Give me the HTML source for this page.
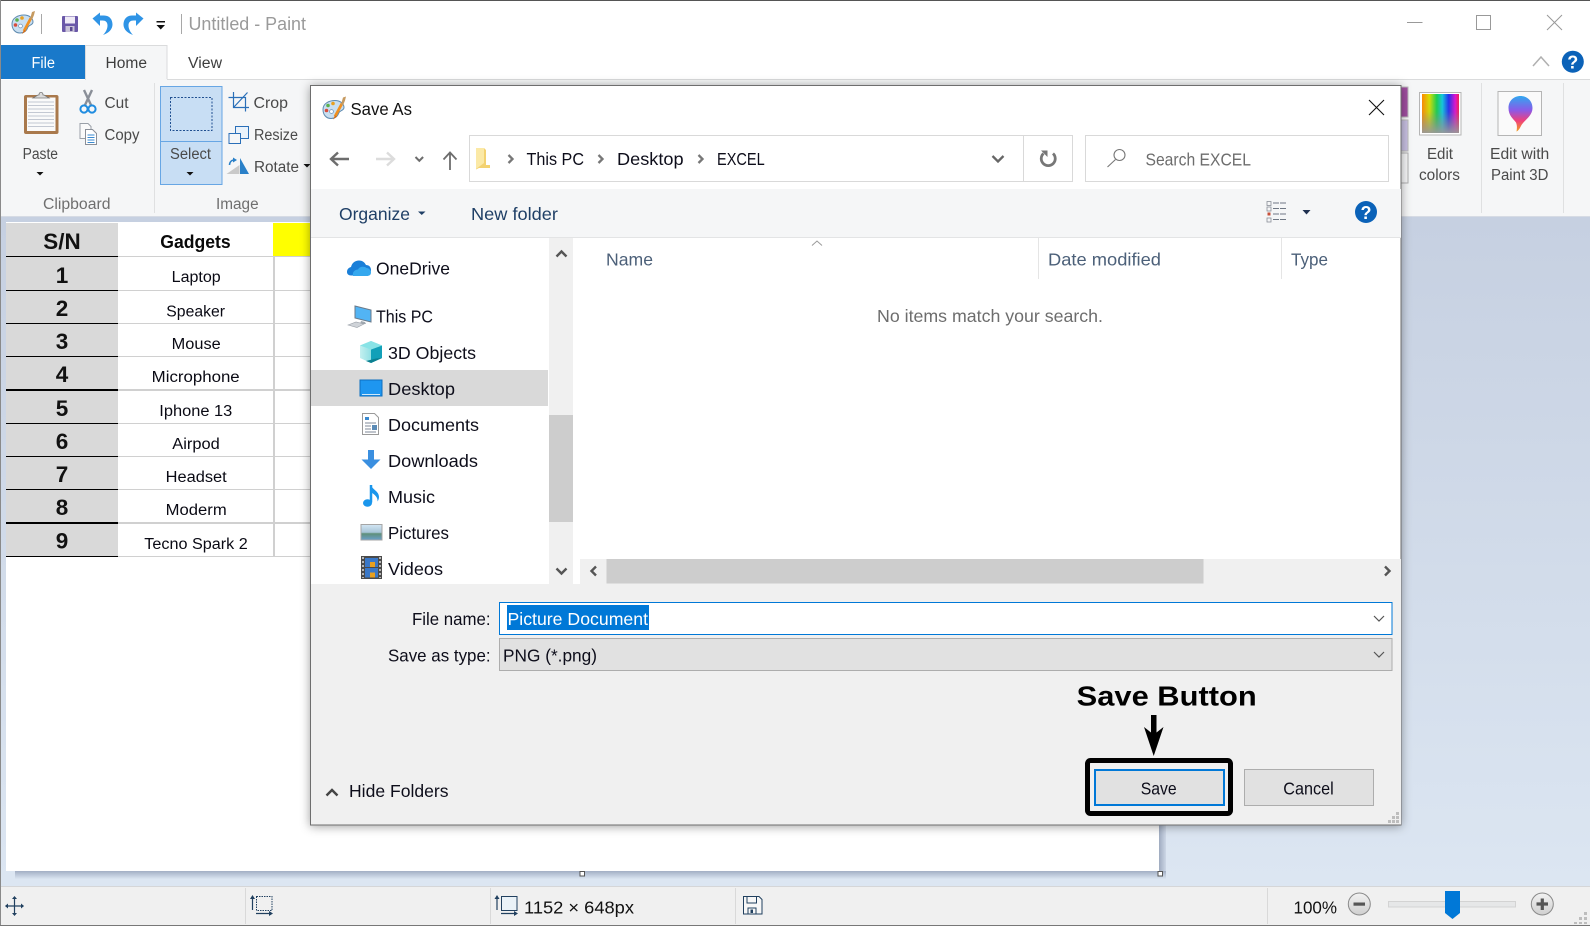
<!DOCTYPE html>
<html lang="en">
<head>
<meta charset="utf-8">
<title>Untitled - Paint</title>
<style>
html,body{margin:0;padding:0;width:1590px;height:926px;overflow:hidden;background:#fff}
svg{display:block;position:absolute;left:0;top:0}
text{font-family:"Liberation Sans",sans-serif;white-space:pre}
.r{font-size:15.5px;fill:#4a4a4a}
.g{font-size:15.5px;fill:#6f6f6f}
.d{font-size:17.5px;fill:#111}
.n{font-size:17.5px;fill:#0d0d1a}
.b{font-size:17.5px;fill:#1f3f66}
.h{font-size:17.5px;fill:#4c6079}
.w{font-size:15.5px;fill:#111}
.num{font-size:22.5px;font-weight:bold;fill:#111}
.it{font-size:15.5px;fill:#0a0a14}
</style>
</head>
<body>
<svg width="1590" height="926" viewBox="0 0 1590 926" xmlns="http://www.w3.org/2000/svg">
<defs>
<linearGradient id="wk" x1="0" y1="0" x2="0" y2="1"><stop offset="0" stop-color="#c6d0e1"/><stop offset="1" stop-color="#dce6f2"/></linearGradient>
<linearGradient id="rb" x1="0" y1="0" x2="1" y2="0"><stop offset="0" stop-color="#ff8a00"/><stop offset=".2" stop-color="#d8e000"/><stop offset=".4" stop-color="#18d050"/><stop offset=".55" stop-color="#10c8e0"/><stop offset=".72" stop-color="#2030f0"/><stop offset=".9" stop-color="#e010d0"/><stop offset="1" stop-color="#f02050"/></linearGradient>
<linearGradient id="rbv" x1="0" y1="0" x2="0" y2="1"><stop offset="0" stop-color="#888" stop-opacity="0"/><stop offset=".45" stop-color="#888" stop-opacity=".1"/><stop offset="1" stop-color="#999" stop-opacity=".95"/></linearGradient>
<linearGradient id="p3" x1="0" y1="0" x2="0" y2="1"><stop offset="0" stop-color="#30a8f0"/><stop offset=".4" stop-color="#8a5ae8"/><stop offset=".7" stop-color="#f0407a"/><stop offset="1" stop-color="#f0a020"/></linearGradient>
<linearGradient id="shR" x1="0" y1="0" x2="1" y2="0"><stop offset="0" stop-color="#9fabc0"/><stop offset="1" stop-color="#cdd7e6"/></linearGradient>
<linearGradient id="shB" x1="0" y1="0" x2="0" y2="1"><stop offset="0" stop-color="#a3afc4"/><stop offset="1" stop-color="#dbe5f1"/></linearGradient>
<linearGradient id="cb" x1="0" y1="0" x2="0" y2="1"><stop offset="0" stop-color="#f2f2f2"/><stop offset="1" stop-color="#cfcfcf"/></linearGradient>
<linearGradient id="pic" x1="0" y1="0" x2="0" y2="1"><stop offset="0" stop-color="#d4e6f4"/><stop offset=".5" stop-color="#a8c6d8"/><stop offset=".6" stop-color="#5f8f7a"/><stop offset="1" stop-color="#6aa0cc"/></linearGradient>
<linearGradient id="cube" x1="0" y1="0" x2="1" y2="0"><stop offset="0" stop-color="#c4f0f0"/><stop offset="1" stop-color="#5fd0d8"/></linearGradient>
<filter id="ds" x="-5%" y="-5%" width="110%" height="110%"><feDropShadow dx="0" dy="1" stdDeviation="5" flood-color="#000" flood-opacity=".38"/></filter>
<g id="pal">
<path d="M1 14C1 8 7 5 13 5c5 0 9 3 9 7 0 3-4 3-5 5-1 3-3 6-8 6-5 0-8-4-8-9z" fill="#c9dff1" stroke="#5f8bb0" stroke-width="1"/>
<circle cx="6" cy="10" r="1.8" fill="#5cb04c"/><circle cx="11" cy="8" r="1.8" fill="#e8a020"/><circle cx="4.500" cy="15" r="1.800" fill="#d84c3c"/><circle cx="9.500" cy="16" r="1.900" fill="#fff" stroke="#6f93b5" stroke-width=".7"/>
<path d="M13 21L20 8" stroke="#f09020" stroke-width="2.800"/><path d="M11 24l2-4 2 1z" fill="#d86a10"/><path d="M19 9l2-7 3-1-1 4-2 5z" fill="#c69a60"/>
</g>
<g id="und">
<path d="M99 15.500h5c6 0 8.500 4.500 8.500 9s-3.500 8.500-9.500 10.500c3-3 4.500-6.500 4.500-9.500 0-3.500-2-5-5-5H99z" fill="#2f94e6"/>
<path d="M92.500 18.500L100 12.500v13.500z" fill="#2f94e6"/>
</g>
</defs>

<!-- app background -->
<rect x="0" y="0" width="1590" height="926" fill="#fff"/>
<rect x="0" y="0" width="1590" height="1" fill="#555"/>
<rect x="0" y="0" width="1" height="926" fill="#8a8a8a"/>

<!-- titlebar -->
<use href="#pal" x="11" y="10"/>
<rect x="41" y="14" width="1" height="20" fill="#a8a8a8"/>
<rect x="62" y="16" width="16" height="16" rx="1" fill="#6a58a8"/><rect x="65" y="16.500" width="10" height="7" fill="#efeaf6"/><rect x="65.500" y="26" width="9" height="6" fill="#c9c3d8"/><rect x="70" y="27" width="2.500" height="4" fill="#5a4a90"/>
<use href="#und"/>
<use href="#und" transform="translate(236,0) scale(-1,1)"/>
<rect x="156.500" y="21" width="8.500" height="1.500" fill="#111"/><path d="M156.500 25h8.500l-4.250 4.500z" fill="#111"/>
<rect x="181" y="14" width="1" height="20" fill="#a8a8a8"/>
<text x="188.500" y="30" font-size="18" fill="#9a9a9a" textLength="117.500" lengthAdjust="spacingAndGlyphs">Untitled - Paint</text>
<!-- window controls -->
<rect x="1407" y="22" width="15.500" height="1" fill="#999"/>
<rect x="1476.500" y="15.500" width="14" height="14" fill="none" stroke="#999" stroke-width="1"/>
<path d="M1547 15l15 15M1562 15l-15 15" stroke="#999" stroke-width="1" fill="none"/>
<path d="M1533 66l8-9 8 9" fill="none" stroke="#b0b0b0" stroke-width="1.500"/>
<ellipse cx="1572.800" cy="61.700" rx="11" ry="11" fill="#0b62b8"/><text x="1572.800" y="68.500" font-size="18" font-weight="bold" fill="#fff" text-anchor="middle">?</text>

<!-- tabs -->
<rect x="1" y="45" width="84" height="34" fill="#1979ca"/>
<text x="31.500" y="68" font-size="15.500" fill="#fff" textLength="23.500" lengthAdjust="spacingAndGlyphs">File</text>
<path d="M85.500 80V45.500h81.500V80" fill="#f5f6f7" stroke="#dadbdc" stroke-width="1"/>
<text x="105.500" y="68" font-size="15.500" fill="#3e3e3e" textLength="41.500" lengthAdjust="spacingAndGlyphs">Home</text>
<text x="188" y="68" font-size="15.500" fill="#3e3e3e" textLength="34" lengthAdjust="spacingAndGlyphs">View</text>
<rect x="167" y="79" width="1423" height="1" fill="#dadbdc"/>
<!-- ribbon -->
<rect x="1" y="80" width="1589" height="137" fill="#f5f6f7"/>
<rect x="86" y="79" width="81" height="2" fill="#f5f6f7"/>
<rect x="154" y="83" width="1" height="130" fill="#dfe0e1"/>
<rect x="1481" y="83" width="1" height="130" fill="#dfe0e1"/>
<rect x="1563" y="83" width="1" height="130" fill="#dfe0e1"/>

<!-- paste -->
<rect x="24" y="95" width="34.500" height="39" rx="2" fill="#a9794c"/><rect x="27" y="97.500" width="28.500" height="33.500" fill="#fafafa"/>
<path d="M28 102h26M28 105.500h26M28 109h26M28 112.500h26M28 116h26M28 119.500h26M28 123h26M28 126.500h26" stroke="#c3c8d2" stroke-width="1"/>
<path d="M33 98l5-3h1c0-3.500 4-3.500 4 0h1l5 3z" fill="#dcdcdc" stroke="#777" stroke-width=".8"/>
<text x="22.600" y="159" class="r" textLength="35.400" lengthAdjust="spacingAndGlyphs">Paste</text>
<path d="M36.500 172h7l-3.500 3.500z" fill="#111"/>
<!-- scissors -->
<path d="M84 90l7 15M92 90l-7 15" stroke="#8a8f98" stroke-width="2.400"/>
<circle cx="84" cy="109" r="3.600" fill="none" stroke="#1f8ce0" stroke-width="2"/><circle cx="92" cy="109" r="3.600" fill="none" stroke="#1f8ce0" stroke-width="2"/>
<text x="104.500" y="108" class="r" textLength="24" lengthAdjust="spacingAndGlyphs">Cut</text>
<!-- copy -->
<path d="M80 123.500h8l3 3v12H80z" fill="#fafafa" stroke="#9aa0a8"/><path d="M85.500 129.500h7l4 4v11h-11z" fill="#fff" stroke="#8a8f98"/><path d="M87.500 135h7M87.500 137.500h7M87.500 140h7M87.500 142.500h7" stroke="#3a8ad0" stroke-width="1"/>
<text x="104.500" y="140" class="r" textLength="35" lengthAdjust="spacingAndGlyphs">Copy</text>
<!-- select -->
<rect x="160.500" y="86.500" width="61.500" height="98" fill="#c8def4" stroke="#67a6e4" stroke-width="1"/>
<rect x="161" y="141" width="61" height="1" fill="#67a6e4"/>
<rect x="170.500" y="97.500" width="41.500" height="33" fill="none" stroke="#1f4f90" stroke-width="1" stroke-dasharray="2 1.500"/>
<text x="170" y="159" class="r" textLength="41" lengthAdjust="spacingAndGlyphs">Select</text>
<path d="M186.500 172h7l-3.500 3.500z" fill="#111"/>
<!-- crop resize rotate -->
<path d="M228.500 97.500h17v14M233.500 92v15.500h15.500M233.500 107.500l14-15" fill="none" stroke="#2a6fb8" stroke-width="1.200"/>
<text x="253.500" y="108" class="r" textLength="34.500" lengthAdjust="spacingAndGlyphs">Crop</text>
<rect x="235.500" y="126.500" width="13" height="12" fill="#e9f2fb" stroke="#2a6fb8"/><rect x="229" y="133.500" width="11.500" height="10" fill="#f5f6f7" stroke="#2a6fb8"/>
<text x="254" y="140" class="r" textLength="44" lengthAdjust="spacingAndGlyphs">Resize</text>
<path d="M226.500 174l13-9v9z" fill="#c9c9c9"/><path d="M240 158v16h9z" fill="#2a80c8"/><path d="M229.500 165c0-3 2-5 5-5" fill="none" stroke="#2a80c8" stroke-width="1.500"/><path d="M233 157.500l4 2.500-4 2.500z" fill="#2a80c8"/>
<text x="254" y="172" class="r" textLength="45" lengthAdjust="spacingAndGlyphs">Rotate</text>
<path d="M303.500 164h7l-3.500 3.500z" fill="#111"/>
<text x="43" y="209" class="g" textLength="67.500" lengthAdjust="spacingAndGlyphs">Clipboard</text>
<text x="216" y="209" class="g" textLength="42.600" lengthAdjust="spacingAndGlyphs">Image</text>

<!-- colour swatches at dialog's right -->
<rect x="1395" y="87" width="13" height="30" fill="#a04ea0" stroke="#bbb"/>
<rect x="1395" y="120" width="13" height="31" fill="#c8c0e2" stroke="#bbb"/>
<rect x="1395" y="153" width="13" height="30" fill="#f5f6f7" stroke="#b0b0b0"/>
<rect x="1419.500" y="92.500" width="41.500" height="42.500" fill="#fff" stroke="#b5b5b5"/>
<rect x="1422" y="94" width="37" height="39" fill="url(#rb)"/><rect x="1422" y="94" width="37" height="39" fill="url(#rbv)"/>
<text x="1427" y="159" class="r" textLength="26" lengthAdjust="spacingAndGlyphs">Edit</text>
<text x="1419" y="180" class="r" textLength="41" lengthAdjust="spacingAndGlyphs">colors</text>
<rect x="1498" y="91.500" width="43.500" height="44" fill="#fafafa" stroke="#b5b5b5"/>
<path d="M1520.500 96c7 0 12 5 12 12 0 8-8 12-11 17-1 2-3 6-5 6.500 .5-3 .8-6-.5-9-3-4-7.500-7-7.500-14.500 0-7 5-12 12-12z" fill="url(#p3)"/>
<text x="1490" y="159" class="r" textLength="59.300" lengthAdjust="spacingAndGlyphs">Edit with</text>
<text x="1491" y="180" class="r" textLength="57.400" lengthAdjust="spacingAndGlyphs">Paint 3D</text>

<!-- workspace -->
<rect x="1" y="217" width="1589" height="670" fill="url(#wk)"/>
<rect x="1" y="216" width="1589" height="1" fill="#d6dbe4"/>
<rect x="1159" y="231" width="7" height="640" fill="url(#shR)"/>
<rect x="15" y="871" width="1151" height="8" fill="url(#shB)"/>
<rect x="6" y="222" width="1153" height="649" fill="#fff"/>
<rect x="580" y="871.500" width="4.500" height="4.500" fill="#fff" stroke="#555" stroke-width="1"/>
<rect x="1158" y="871.500" width="4.500" height="4.500" fill="#fff" stroke="#555" stroke-width="1"/>

<!-- sheet -->
<rect x="6" y="223" width="112" height="333" fill="#d9d9d9"/>
<rect x="273" y="223" width="38" height="34" fill="#ffff00"/>
<rect x="118" y="256" width="192" height="1" fill="#d0d0d0"/>
<rect x="118" y="290" width="192" height="1" fill="#d0d0d0"/>
<rect x="118" y="323" width="192" height="1" fill="#d0d0d0"/>
<rect x="118" y="356" width="192" height="1" fill="#d0d0d0"/>
<rect x="118" y="389" width="192" height="2" fill="#d0d0d0"/>
<rect x="118" y="423" width="192" height="1" fill="#d0d0d0"/>
<rect x="118" y="456" width="192" height="1" fill="#d0d0d0"/>
<rect x="118" y="489" width="192" height="1" fill="#d0d0d0"/>
<rect x="118" y="522" width="192" height="2" fill="#d0d0d0"/>
<rect x="118" y="556" width="192" height="1" fill="#d0d0d0"/>
<rect x="273" y="257" width="2" height="300" fill="#d0d0d0"/>
<rect x="6" y="256" width="112" height="1" fill="#000"/>
<rect x="6" y="290" width="112" height="1" fill="#000"/>
<rect x="6" y="323" width="112" height="1" fill="#000"/>
<rect x="6" y="356" width="112" height="1" fill="#000"/>
<rect x="6" y="389" width="112" height="2" fill="#000"/>
<rect x="6" y="423" width="112" height="1" fill="#000"/>
<rect x="6" y="456" width="112" height="1" fill="#000"/>
<rect x="6" y="489" width="112" height="1" fill="#000"/>
<rect x="6" y="522" width="112" height="2" fill="#000"/>
<rect x="6" y="556" width="112" height="1" fill="#000"/>
<text x="43.300" y="249" class="num" textLength="37.400" lengthAdjust="spacingAndGlyphs">S/N</text>
<text x="160.300" y="247.800" font-size="18" font-weight="bold" fill="#0a0a0a" textLength="70.400" lengthAdjust="spacingAndGlyphs">Gadgets</text>
<g text-anchor="middle">
<text x="62" y="283" class="num">1</text>
<text x="62" y="316" class="num">2</text>
<text x="62" y="349" class="num">3</text>
<text x="62" y="382" class="num">4</text>
<text x="62" y="416" class="num">5</text>
<text x="62" y="449" class="num">6</text>
<text x="62" y="482" class="num">7</text>
<text x="62" y="515" class="num">8</text>
<text x="62" y="548.500" class="num">9</text>
</g>
<text x="171.700" y="282.200" class="it" textLength="49" lengthAdjust="spacingAndGlyphs">Laptop</text>
<text x="166.300" y="316.300" class="it" textLength="58.700" lengthAdjust="spacingAndGlyphs">Speaker</text>
<text x="171.700" y="349.200" class="it" textLength="49" lengthAdjust="spacingAndGlyphs">Mouse</text>
<text x="151.700" y="382.200" class="it" textLength="88" lengthAdjust="spacingAndGlyphs">Microphone</text>
<text x="159.300" y="416.200" class="it" textLength="73" lengthAdjust="spacingAndGlyphs">Iphone 13</text>
<text x="172.300" y="449.200" class="it" textLength="47.400" lengthAdjust="spacingAndGlyphs">Airpod</text>
<text x="165.700" y="482.200" class="it" textLength="61" lengthAdjust="spacingAndGlyphs">Headset</text>
<text x="165.700" y="515.200" class="it" textLength="61" lengthAdjust="spacingAndGlyphs">Moderm</text>
<text x="144.300" y="549" class="it" textLength="103.400" lengthAdjust="spacingAndGlyphs">Tecno Spark 2</text>

<!-- status bar -->
<rect x="1" y="887" width="1589" height="38" fill="#f0f0f0"/>
<rect x="1" y="886" width="1589" height="1" fill="#d5d6d8"/>
<rect x="0" y="925" width="1590" height="1" fill="#777"/>
<rect x="245" y="888" width="1" height="36" fill="#d9d9d9"/>
<rect x="490" y="888" width="1" height="36" fill="#d9d9d9"/>
<rect x="735" y="888" width="1" height="36" fill="#d9d9d9"/>
<rect x="1267" y="888" width="1" height="36" fill="#d9d9d9"/>
<path d="M14.500 897v18M5.500 906h18" stroke="#21405f" stroke-width="1.200"/>
<path d="M14.500 896l-2.500 3h5zM14.500 916l-2.500-3h5zM5 906l3-2.500v5zM24 906l-3-2.500v5z" fill="#21405f"/>
<rect x="256.500" y="896.500" width="15.500" height="14" fill="none" stroke="#21405f" stroke-dasharray="1.500 1"/>
<path d="M252.500 898v12M256 913.500h15" stroke="#21405f" stroke-width="1.200"/><path d="M252.500 895l-2.500 4h5zM273 913.500l-4-2.500v5z" fill="#21405f"/>
<rect x="501.500" y="896.500" width="15.500" height="14" fill="#eaf2f8" stroke="#21405f"/>
<path d="M497 898v12M501 913.500h15" stroke="#21405f" stroke-width="1.200"/><path d="M497 895l-2.500 4h5zM518 913.500l-4-2.500v5z" fill="#21405f"/>
<text x="524" y="913.500" font-size="17.500" fill="#111" textLength="110" lengthAdjust="spacingAndGlyphs">1152 × 648px</text>
<path d="M743.500 896.500h15.500l3 3v14.500h-18.500z" fill="#f7f7f7" stroke="#21405f"/><path d="M747 896.500v6.500h9.500v-6.500M748 914v-6h8v6" fill="none" stroke="#21405f"/><rect x="750.500" y="909.500" width="2.500" height="3.500" fill="#21405f"/>
<text x="1293.500" y="913.500" font-size="17.500" fill="#111" textLength="43.500" lengthAdjust="spacingAndGlyphs">100%</text>
<circle cx="1359.300" cy="904" r="11" fill="url(#cb)" stroke="#8a8a8a"/><rect x="1353.500" y="902.500" width="11.500" height="3.200" fill="#555"/>
<rect x="1388.500" y="901.500" width="127" height="5.500" fill="#e6e7e8" stroke="#d3d3d3"/>
<path d="M1445 891h15v22l-7.500 6-7.500-6z" fill="#0078d7"/>
<circle cx="1542.300" cy="904" r="11" fill="url(#cb)" stroke="#8a8a8a"/><path d="M1536.500 904h11.500M1542.300 898.500v11.500" stroke="#555" stroke-width="3.200"/>
<path d="M1584 917h3v3h-3zM1584 912h3v3h-3zM1579 917h3v3h-3zM1579 922h3v2h-3zM1584 922h3v2h-3zM1574 922h3v2h-3z" fill="#bdbdbd"/>

<!-- DIALOG -->
<rect x="310.500" y="85.500" width="1090.500" height="739.500" fill="#fff" stroke="#6e6e6e" stroke-width="1" filter="url(#ds)"/>
<use href="#pal" x="322" y="95.500"/>
<text x="350.500" y="114.800" font-size="17.500" fill="#111" textLength="61.500" lengthAdjust="spacingAndGlyphs">Save As</text>
<path d="M1369 100l15 15M1384 100l-15 15" stroke="#111" stroke-width="1.100" fill="none"/>

<!-- nav buttons -->
<path d="M349 159h-17M338 152.500l-7 6.500 7 6.500" fill="none" stroke="#6d6d6d" stroke-width="2.400"/>
<path d="M376 159h17M387 152.500l7 6.500-7 6.500" fill="none" stroke="#dcdcdc" stroke-width="2.400"/>
<path d="M415.500 157l3.800 3.800 3.800-3.800" fill="none" stroke="#6d6d6d" stroke-width="2"/>
<path d="M450 170v-17M443.500 159.500l6.500-7 6.500 7" fill="none" stroke="#6d6d6d" stroke-width="1.800"/>
<rect x="469.500" y="135.500" width="603" height="46" fill="#fff" stroke="#d9d9d9"/>
<rect x="1023" y="136" width="1" height="45" fill="#d9d9d9"/>
<path d="M476 148h8l2 2v15h4v3h-11l-3 1.500z" fill="#f3d271"/><path d="M476 148h8v15l-8 6z" fill="#fbe9a6"/>
<path d="M508.500 155l4 4-4 4M598.500 155l4 4-4 4M698.500 155l4 4-4 4" fill="none" stroke="#777" stroke-width="2.300"/>
<text x="526.500" y="165" class="n" textLength="57.500" lengthAdjust="spacingAndGlyphs">This PC</text>
<text x="617" y="165" class="n" textLength="66.600" lengthAdjust="spacingAndGlyphs">Desktop</text>
<text x="717" y="165" class="n" textLength="47.700" lengthAdjust="spacingAndGlyphs">EXCEL</text>
<path d="M992.500 156l5.500 5.500 5.500-5.500" fill="none" stroke="#666" stroke-width="2.300"/>
<path d="M1043.500 153.500a7 7 0 1 0 9.500 0" fill="none" stroke="#777" stroke-width="2.800"/><path d="M1041 150.500h6.500v6.500z" fill="#777"/>
<rect x="1085.500" y="135.500" width="303" height="46" fill="#fff" stroke="#d9d9d9"/>
<circle cx="1119.500" cy="155" r="5.500" fill="none" stroke="#777" stroke-width="1.100"/><path d="M1115.500 159.500l-8 7.500" stroke="#777" stroke-width="1.100"/>
<text x="1145.500" y="165.700" font-size="17.500" fill="#6d6d6d" textLength="105.500" lengthAdjust="spacingAndGlyphs">Search EXCEL</text>

<!-- toolbar -->
<rect x="311" y="189" width="1090" height="48" fill="#f5f6f7"/>
<rect x="311" y="237" width="1090" height="1" fill="#e3e4e5"/>
<text x="339" y="220" class="b" textLength="71" lengthAdjust="spacingAndGlyphs">Organize</text>
<path d="M418 211.500h7.500l-3.750 3.500z" fill="#1f3f66"/>
<text x="471" y="220" class="b" textLength="87" lengthAdjust="spacingAndGlyphs">New folder</text>
<rect x="1267" y="201.500" width="4" height="4" fill="none" stroke="#8a8f98" stroke-width=".8"/><rect x="1267" y="207" width="4" height="4" fill="none" stroke="#8a8f98" stroke-width=".8"/><rect x="1267.500" y="212.500" width="3" height="3" fill="#c8503a"/><rect x="1267" y="218" width="4" height="4" fill="none" stroke="#8a8f98" stroke-width=".8"/>
<path d="M1273 203h13.500M1273 208.500h13.500M1273 214h13.500M1273 219.500h13.500" stroke="#6f7784" stroke-width="1" stroke-dasharray="6 1"/>
<path d="M1302.500 210h8l-4 4.500z" fill="#1f3050"/>
<ellipse cx="1366" cy="212" rx="11" ry="11" fill="#0b62b8"/><text x="1366" y="218.800" font-size="18" font-weight="bold" fill="#fff" text-anchor="middle">?</text>

<!-- header row -->
<path d="M812 245.500l5-4.500 5 4.500" fill="none" stroke="#9a9a9a" stroke-width="1"/>
<text x="606" y="265.300" class="h" textLength="47" lengthAdjust="spacingAndGlyphs">Name</text>
<text x="1048" y="265.500" class="h" textLength="113" lengthAdjust="spacingAndGlyphs">Date modified</text>
<text x="1291" y="265.500" class="h" textLength="37" lengthAdjust="spacingAndGlyphs">Type</text>
<rect x="1038" y="238" width="1" height="41" fill="#e5e5e5"/>
<rect x="1281" y="238" width="1" height="41" fill="#e5e5e5"/>
<text x="877" y="322" font-size="17.500" fill="#6d6d6d" textLength="226" lengthAdjust="spacingAndGlyphs">No items match your search.</text>

<!-- nav pane -->
<rect x="311" y="370" width="237" height="36" fill="#d9d9d9"/>
<rect x="549" y="238" width="24" height="346" fill="#f0f0f0"/>
<rect x="549" y="415" width="24" height="107" fill="#cdcdcd"/>
<path d="M556.500 256.500l5-5 5 5" fill="none" stroke="#555" stroke-width="2.400"/>
<path d="M556.500 568.500l5 5 5-5" fill="none" stroke="#555" stroke-width="2.400"/>

<path d="M347 272c0-3 2-4.500 4-5 1-4 4-6.500 8-6.500 3 0 5.500 1.500 7 4.500 3 0 5 2 5 5 0 3-2 5.500-5 5.500h-15c-2.500 0-4-1.500-4-3.500z" fill="#1a7fd8"/><path d="M353 276c-1-4 2-6.500 5-6.500 1.500-3 6-3.500 8.500-1.500 2.500 0 4.500 2.500 4.500 4.500 0 2.500-2 3.500-4 3.500z" fill="#35a8ee"/>
<text x="376" y="274.500" class="n" textLength="74" lengthAdjust="spacingAndGlyphs">OneDrive</text>

<path d="M355 306l16 4v12l-16-4z" fill="#52b4f4" stroke="#6a7a8a" stroke-width="1"/><path d="M361 321l-1 3h6l-1-2z" fill="#a0a8b0"/><path d="M348 325l8-3 8 2-7 3.500z" fill="#cfd3d8" stroke="#9aa0a8" stroke-width=".6"/>
<text x="376" y="322.500" class="n" textLength="57" lengthAdjust="spacingAndGlyphs">This PC</text>

<path d="M371 341l11 4.500v12.500l-11 5-11-5v-12.500z" fill="url(#cube)"/><path d="M371 349.500l11-4v12.500l-11 5z" fill="#12a0b8"/><path d="M371 341l11 4.500-11 4-11-4z" fill="#88e3e6"/><path d="M376 358.500l6-.5-11 5-5-2z" fill="#0b7f90"/>
<text x="388" y="359" class="n" textLength="88" lengthAdjust="spacingAndGlyphs">3D Objects</text>

<rect x="360" y="380" width="22" height="16" fill="#1e96f0" stroke="#0d6fc0" stroke-width="1"/><rect x="362" y="394" width="18" height="1" fill="#cfe9fb"/>
<text x="388" y="395" class="n" textLength="67" lengthAdjust="spacingAndGlyphs">Desktop</text>

<path d="M362.500 413.500h12l4 4v17h-16z" fill="#fff" stroke="#9a9a9a"/><path d="M365 419h4M365 423h11M365 426h6M365 429h6M365 432h11" stroke="#7f8a98" stroke-width="1"/><rect x="372" y="425" width="5" height="5" fill="#5a8ab5"/><rect x="365" y="417" width="4" height="3" fill="#3a8ad0"/>
<text x="388" y="431" class="n" textLength="91" lengthAdjust="spacingAndGlyphs">Documents</text>

<path d="M368 450h6v9.500h6.500L371 469l-9.500-9.500h6.500z" fill="#3a8fe0"/>
<text x="388" y="467" class="n" textLength="90" lengthAdjust="spacingAndGlyphs">Downloads</text>

<path d="M371 485v17.500" stroke="#1a96ec" stroke-width="2.500"/><ellipse cx="367.500" cy="503" rx="4.500" ry="3.800" fill="#1a96ec"/><path d="M371 485c1.500 5 8 6 8 12 0 2-.8 3.500-1.500 4.500 .5-4-3-7.500-6.500-9z" fill="#1a96ec"/>
<text x="388" y="503" class="n" textLength="47" lengthAdjust="spacingAndGlyphs">Music</text>

<rect x="361" y="524.500" width="21" height="15.500" fill="url(#pic)" stroke="#a5a5a5"/>
<text x="388" y="539" class="n" textLength="61" lengthAdjust="spacingAndGlyphs">Pictures</text>

<rect x="361" y="556" width="21" height="23" fill="#4a4a4a"/><rect x="365" y="558" width="13" height="9" fill="#3a78c8"/><rect x="365" y="568" width="13" height="9.500" fill="#3a78c8"/><rect x="370" y="562" width="5" height="5" fill="#e8a020"/><rect x="370" y="572.500" width="5" height="5" fill="#e8a020"/><path d="M363 557v21M380 557v21" stroke="#ddd" stroke-width="1.500" stroke-dasharray="2 2"/>
<text x="388" y="575" class="n" textLength="55" lengthAdjust="spacingAndGlyphs">Videos</text>

<!-- footer -->
<rect x="311" y="584" width="1090" height="240.500" fill="#f0f0f0"/>
<rect x="580" y="559" width="821" height="25" fill="#f0f0f0"/>
<rect x="606.500" y="559" width="597" height="24.500" fill="#cdcdcd"/>
<path d="M596 566.500l-4.500 4.500 4.500 4.500" fill="none" stroke="#555" stroke-width="2.400"/>
<path d="M1385 566.500l4.500 4.500-4.500 4.500" fill="none" stroke="#555" stroke-width="2.400"/>

<text x="412" y="625" class="n" textLength="78.600" lengthAdjust="spacingAndGlyphs">File name:</text>
<rect x="499.500" y="602.500" width="892.500" height="32" fill="#fff" stroke="#0078d7"/>
<rect x="507" y="605" width="142" height="25" fill="#0078d7"/>
<text x="507.500" y="625" font-size="17.500" fill="#fff" textLength="140.500" lengthAdjust="spacingAndGlyphs">Picture Document</text>
<path d="M1374 616l5 5 5-5" fill="none" stroke="#555" stroke-width="1.200"/>
<text x="388" y="661.700" class="n" textLength="102.600" lengthAdjust="spacingAndGlyphs">Save as type:</text>
<rect x="499.500" y="638.500" width="892.500" height="32" fill="#e1e1e1" stroke="#adadad"/>
<text x="503" y="661.700" class="n" textLength="94" lengthAdjust="spacingAndGlyphs">PNG (*.png)</text>
<path d="M1374 652l5 5 5-5" fill="none" stroke="#555" stroke-width="1.200"/>

<path d="M326.500 795.500l5.500-5.500 5.500 5.500" fill="none" stroke="#444" stroke-width="2.400"/>
<text x="349" y="797" class="n" textLength="99.500" lengthAdjust="spacingAndGlyphs">Hide Folders</text>

<!-- annotation -->
<text x="1076.700" y="705.500" font-size="28" font-weight="bold" fill="#000" textLength="180" lengthAdjust="spacingAndGlyphs">Save Button</text>
<path d="M1151 715h5.500v17.500l7-5.500-9.800 29-9.700-29 7 5.500z" fill="#000"/>
<rect x="1087.500" y="760.500" width="143" height="53" rx="3" fill="#f0f0f0" stroke="#000" stroke-width="5"/>
<rect x="1095" y="770" width="129" height="35" fill="#e1e1e1" stroke="#0078d7" stroke-width="2"/>
<text x="1140.700" y="794.300" class="n" textLength="36" lengthAdjust="spacingAndGlyphs">Save</text>
<rect x="1244.500" y="769.500" width="129" height="36" fill="#e1e1e1" stroke="#adadad"/>
<text x="1283.300" y="794.300" class="n" textLength="50.400" lengthAdjust="spacingAndGlyphs">Cancel</text>
<path d="M1396 812h3v3h-3zM1392 816h3v3h-3zM1396 816h3v3h-3zM1388 820h3v3h-3zM1392 820h3v3h-3zM1396 820h3v3h-3z" fill="#bdbdbd"/>
</svg>
</body>
</html>
